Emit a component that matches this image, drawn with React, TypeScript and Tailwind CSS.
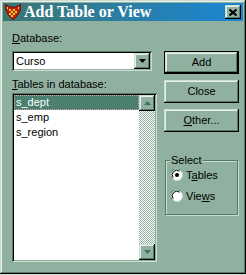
import React from "react";

const raised =
  "shadow-[inset_-1px_-1px_0_#000,inset_1px_1px_0_#c8dcd2,inset_-2px_-2px_0_#587868,inset_2px_2px_0_#e8f0ec]";
const sunken =
  "shadow-[inset_1px_1px_0_#587868,inset_-1px_-1px_0_#c8dcd2,inset_2px_2px_0_#000,inset_-2px_-2px_0_#90b0a0]";

function Arrow({ up }: { up?: boolean }) {
  return (
    <svg width="7" height="4" viewBox="0 0 7 4">
      {up ? (
        <polygon points="3.5,0 7,4 0,4" fill="#3f6f60" />
      ) : (
        <polygon points="0,0 7,0 3.5,4" fill="#3f6f60" />
      )}
    </svg>
  );
}

function Radio({ checked }: { checked?: boolean }) {
  return (
    <svg width="12" height="12" viewBox="0 0 12 12">
      <circle cx="6" cy="6" r="5.5" fill="#fff" stroke="#c8dcd2" />
      <path d="M1.2 9.5 A5.5 5.5 0 0 1 9.5 1.2" fill="none" stroke="#587868" />
      <path d="M2.2 8.5 A4.5 4.5 0 0 1 8.5 2.2" fill="none" stroke="#000" />
      {checked && <circle cx="6" cy="6" r="2" fill="#000" />}
    </svg>
  );
}

function Icon() {
  return (
    <svg width="16" height="16" viewBox="0 0 16 16">
      <polygon
        points="0,0 5,3 11,3 16,0 15,7 12,12 8,16 4,12 1,7"
        fill="#c02010"
        stroke="#600800"
        strokeWidth="0.8"
      />
      <g fill="#f0d020">
        <rect x="4" y="5" width="2" height="2" />
        <rect x="8" y="5" width="2" height="2" />
        <rect x="6" y="7" width="2" height="2" />
        <rect x="10" y="7" width="2" height="2" />
        <rect x="4" y="9" width="2" height="2" />
        <rect x="8" y="9" width="2" height="2" />
        <rect x="6" y="11" width="2" height="2" />
        <rect x="2" y="3" width="1" height="2" />
        <rect x="13" y="3" width="1" height="2" />
      </g>
    </svg>
  );
}

export default function App() {
  return (
    <div className="w-[246px] h-[275px] bg-[#c8dcd2] overflow-hidden font-['Liberation_Sans',Arial,sans-serif] text-[11px] text-black">
      <div className="h-[274px] w-[246px] p-[3px] flex flex-col bg-[#90b0a0] shadow-[inset_-1px_-1px_0_#000,inset_1px_1px_0_#c8dcd2,inset_-2px_-2px_0_#587868,inset_2px_2px_0_#e8f0ec]">
        {/* title bar */}
        <div className="h-[18px] flex items-center bg-[linear-gradient(to_right,#3c7672,#1a86d4)]">
          <div className="ml-[2px] w-[16px] h-[16px] flex">
            <Icon />
          </div>
          <div className="ml-[3px] text-white font-bold text-[16px] leading-[18px] font-['Liberation_Serif','Times_New_Roman',serif]">
            Add Table or View
          </div>
          <div className="flex-1" />
          <div
            className={`mr-[2px] w-[16px] h-[14px] bg-[#90b0a0] flex items-center justify-center ${raised}`}
          >
            <svg width="8" height="7" viewBox="0 0 8 7">
              <path d="M0.5 0.5 L7.5 6.5 M7.5 0.5 L0.5 6.5" stroke="#000" strokeWidth="2" />
            </svg>
          </div>
        </div>

        {/* body */}
        <div className="flex gap-[7px] pl-[9px]">
          {/* left column */}
          <div className="w-[145px] flex flex-col">
            <div className="mt-[11px] leading-[13px] h-[13px]">
              <span className="underline underline-offset-[1px]">D</span>atabase:
            </div>
            <div className={`mt-[6px] w-[140px] h-[20px] bg-white flex items-center p-[2px] ${sunken}`}>
              <div className="flex-1 pl-[2px] leading-[13px]">Curso</div>
              <div className={`w-[16px] h-[16px] bg-[#90b0a0] flex items-center justify-center ${raised}`}>
                <svg width="7" height="4" viewBox="0 0 7 4">
                  <polygon points="0,0 7,0 3.5,4" fill="#000" />
                </svg>
              </div>
            </div>
            <div className="mt-[7px] leading-[13px] h-[13px]">
              <span className="underline underline-offset-[1px]">T</span>ables in database:
            </div>
            <div className={`mt-[2px] w-[145px] h-[169px] bg-white flex p-[2px] ${sunken}`}>
              <div className="flex-1 flex flex-col">
                <div className="h-[15px] leading-[15px] pl-[2px] bg-[#4c806e] text-white outline outline-1 outline-dotted outline-[#e0a0b0] -outline-offset-1">
                  s_dept
                </div>
                <div className="h-[15px] leading-[15px] pl-[2px]">s_emp</div>
                <div className="h-[15px] leading-[15px] pl-[2px]">s_region</div>
              </div>
              <div className="w-[16px] flex flex-col">
                <div className={`w-[16px] h-[16px] bg-[#90b0a0] flex items-center justify-center ${raised}`}>
                  <Arrow up />
                </div>
                <div className="flex-1 bg-[repeating-conic-gradient(#ffffff_0_25%,#90b0a0_0_50%)] bg-[length:2px_2px]" />
                <div className={`w-[16px] h-[16px] bg-[#90b0a0] flex items-center justify-center ${raised}`}>
                  <Arrow />
                </div>
              </div>
            </div>
          </div>

          {/* right column */}
          <div className="w-[75px] flex flex-col pt-[30px]">
            <div className="h-[23px] border border-black">
              <div className={`h-full flex items-center justify-center bg-[#90b0a0] ${raised}`}>Add</div>
            </div>
            <div className={`mt-[6px] h-[23px] flex items-center justify-center bg-[#90b0a0] ${raised}`}>
              Close
            </div>
            <div className={`mt-[6px] h-[23px] flex items-center justify-center bg-[#90b0a0] ${raised}`}>
              <span>
                <span className="underline underline-offset-[1px]">O</span>ther...
              </span>
            </div>
            <div className="relative mt-[28px] mx-[1px] h-[55px] border border-[#587868] shadow-[1px_1px_0_#c8dcd2,inset_1px_1px_0_#c8dcd2]">
              <div className="absolute -top-[7px] left-[4px] px-[1px] bg-[#90b0a0] leading-[13px]">Select</div>
              <div className="flex flex-col pl-[5px] pt-[7px] gap-[7px]">
                <div className="flex items-center h-[14px] gap-[3px]">
                  <Radio checked />
                  <span>
                    T<span className="underline underline-offset-[1px]">a</span>bles
                  </span>
                </div>
                <div className="flex items-center h-[14px] gap-[3px]">
                  <Radio />
                  <span>
                    Vie<span className="underline underline-offset-[1px]">w</span>s
                  </span>
                </div>
              </div>
            </div>
          </div>
        </div>
      </div>
    </div>
  );
}
